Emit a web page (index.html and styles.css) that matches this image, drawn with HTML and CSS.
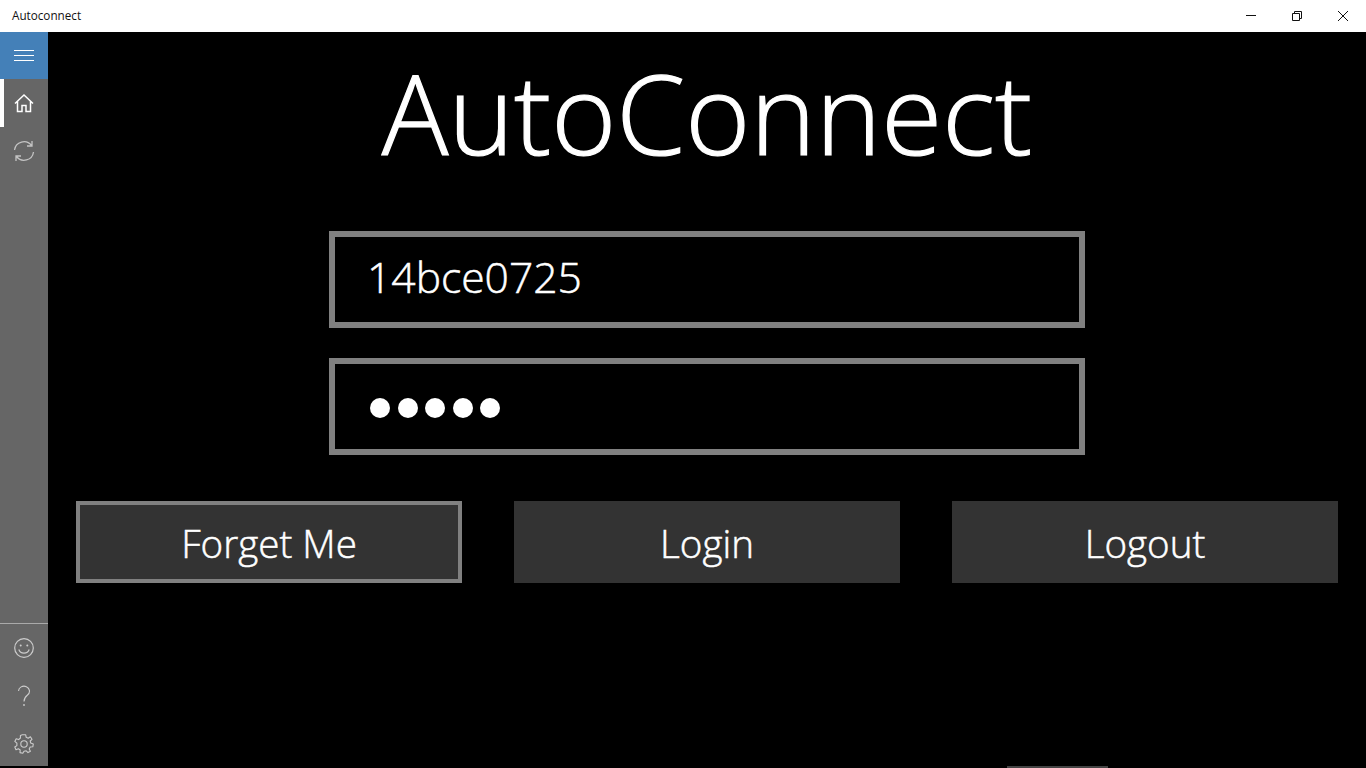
FILE: index.html
```html
<!DOCTYPE html>
<html>
<head>
  <title>Autoconnect</title>
  <link rel="stylesheet" href="styles.css">
</head>
<body>
  <div class="titlebar">
    <span class="app-name">Autoconnect</span>
    <div class="window-controls">
      <div class="win-btn">
        <svg width="12" height="12" viewBox="0 0 12 12"><path d="M1 5.5H11" stroke="#111" fill="none"/></svg>
      </div>
      <div class="win-btn">
        <svg width="12" height="12" viewBox="0 0 12 12"><path d="M1.5 3.5H8.5V10.5H1.5ZM3.5 3.5V1.5H10.5V8.5H8.5" stroke="#111" fill="none"/></svg>
      </div>
      <div class="win-btn">
        <svg width="12" height="12" viewBox="0 0 12 12"><path d="M1 1L11 11M11 1L1 11" stroke="#111" fill="none"/></svg>
      </div>
    </div>
  </div>

  <div class="app">
    <div class="sidebar">
      <div class="nav-item menu">
        <svg width="20" height="21" viewBox="0 0 20 21"><path d="M0 5.5H20M0 10.5H20M0 15.5H20" stroke="#fff" fill="none"/></svg>
      </div>
      <div class="nav-item active">
        <svg width="20" height="20" viewBox="0 0 20 20"><path d="M1 10.5L10 2L19 10.5M3.5 8.5V18.5H8V12.5H12V18.5H16.5V8.5" stroke="#fff" stroke-width="1.5" fill="none"/></svg>
      </div>
      <div class="nav-item">
        <svg width="22" height="22" viewBox="0 0 22 22"><path d="M1.5 10A9.5 9.5 0 0 1 18.5 5.5M20.5 12A9.5 9.5 0 0 1 3.5 16.5M19 1V6H14M3 21V16H8" stroke="#c4c4c4" stroke-width="1.3" fill="none"/></svg>
      </div>
      <div class="nav-spacer"></div>
      <div class="nav-bottom">
        <div class="nav-item">
          <svg width="20" height="20" viewBox="0 0 20 20"><circle cx="10" cy="10" r="9.3" stroke="#ccc" stroke-width="1.2" fill="none"/><circle cx="6.7" cy="7.5" r="1" fill="#ccc"/><circle cx="13.3" cy="7.5" r="1" fill="#ccc"/><path d="M4.8 11.5A5.5 5.5 0 0 0 15.2 11.5" stroke="#ccc" stroke-width="1.2" fill="none"/></svg>
        </div>
        <div class="nav-item">
          <svg width="14" height="22" viewBox="0 0 14 22"><path d="M1.5 6A5.5 5 0 1 1 10.5 10C8 12 7 13 7 16.5" stroke="#ccc" stroke-width="1.1" fill="none"/><circle cx="7" cy="20" r="0.9" fill="#ccc"/></svg>
        </div>
        <div class="nav-item">
          <svg width="20" height="20" viewBox="0 0 20 20"><path d="M8.3 .8H11.7L12.2 3.3L14.2 4.2L16.4 2.8L18 5.3L16.2 7L16.7 9L19.3 10L18.8 12.8L16.2 13L15.2 14.9L16.4 17.2L14 18.6L12.2 16.8L10 17.2L8.8 19.3L6 18.6L6.2 16L4.4 14.8L2 15.8L.8 13L2.9 11.6V9.2L.8 7.4L2.2 4.8L4.6 5.6L6.4 4L6.4 1.4Z" stroke="#ccc" stroke-width="1.1" stroke-linejoin="round" fill="none"/><circle cx="10" cy="10" r="3.2" stroke="#ccc" stroke-width="1.1" fill="none"/></svg>
        </div>
      </div>
    </div>

    <div class="content">
      <h1 class="heading">AutoConnect</h1>
      <div class="field user-field">14bce0725</div>
      <div class="field pass-field">
        <span class="dot"></span><span class="dot"></span><span class="dot"></span><span class="dot"></span><span class="dot"></span>
      </div>
      <div class="buttons">
        <button class="btn focused">Forget Me</button>
        <button class="btn">Login</button>
        <button class="btn">Logout</button>
      </div>
    </div>
  </div>
  <div class="keyboard-hint"></div>
</body>
</html>
```

FILE: styles.css
```css
html, body {
  margin: 0;
  padding: 0;
  height: 768px;
  overflow: hidden;
  background-color: #000;
  font-family: "Open Sans", "Noto Sans", sans-serif;
  color: #fff;
}

/* Title bar */
.titlebar {
  height: 32px;
  background-color: #fff;
  color: #111;
  display: flex;
  align-items: center;
  justify-content: space-between;
}

.app-name {
  font-size: 11.7px;
  padding-left: 12px;
  padding-bottom: 2px;
}

.window-controls {
  display: flex;
}

.win-btn {
  width: 46px;
  height: 32px;
  display: flex;
  align-items: center;
  justify-content: center;
}

/* App area */
.app {
  display: flex;
  height: 734px;
}

.sidebar {
  width: 48px;
  flex-shrink: 0;
  background-color: #666;
  display: flex;
  flex-direction: column;
  overflow: hidden;
}

.nav-item {
  height: 48px;
  flex-shrink: 0;
  display: flex;
  align-items: center;
  justify-content: center;
  box-sizing: border-box;
}

.nav-item.menu {
  height: 47px;
  background-color: #4480b8;
}

.nav-item.active {
  border-left: 4px solid #fff;
  padding-right: 4px;
}

.nav-spacer {
  flex: 1;
}

.nav-bottom {
  flex-shrink: 0;
  height: 143px;
  box-sizing: border-box;
  border-top: 1px solid #aaa;
}

/* Main content */
.content {
  flex: 1;
  padding: 0 28px;
  display: flex;
  flex-direction: column;
  align-items: center;
}

.heading {
  margin: 10px 0 0;
  height: 189px;
  font-size: 111px;
  line-height: 140px;
  font-weight: 300;
  -webkit-text-stroke: 1.2px #fff;
}

.field {
  width: 756px;
  height: 97px;
  box-sizing: border-box;
  border: 6px solid #808080;
  padding-left: 32px;
  padding-bottom: 8px;
  display: flex;
  align-items: center;
  font-size: 42.6px;
  font-weight: 300;
  -webkit-text-stroke: 0.5px #fff;
}

.pass-field {
  margin-top: 30px;
  padding-left: 35px;
  padding-top: 2px;
  padding-bottom: 0;
  gap: 7.5px;
}

.dot {
  width: 20px;
  height: 20px;
  border-radius: 50%;
  background-color: #fff;
}

.buttons {
  width: 100%;
  margin-top: 46px;
  display: grid;
  grid-template-columns: repeat(3, 386px);
  justify-content: space-between;
}

.btn {
  height: 82px;
  box-sizing: border-box;
  border: none;
  background-color: #333;
  color: #fff;
  font-family: inherit;
  font-size: 38.6px;
  font-weight: 300;
  padding: 1px 0 0;
  -webkit-text-stroke: 0.5px #fff;
}

.btn.focused {
  border: 4px solid #808080;
  padding: 2px 0 0;
}

.keyboard-hint {
  position: absolute;
  left: 1007px;
  top: 766px;
  width: 101px;
  height: 2px;
  background-color: #444;
}
```
